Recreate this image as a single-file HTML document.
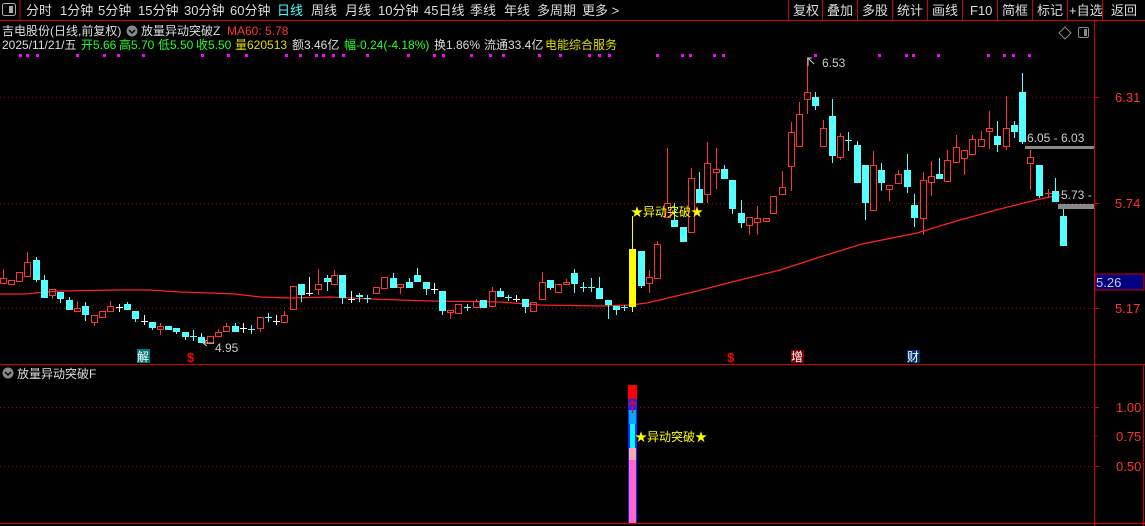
<!DOCTYPE html>
<html><head><meta charset="utf-8"><style>
html,body{margin:0;padding:0;background:#000;width:1145px;height:526px;overflow:hidden}
svg{display:block}
text{font-family:"Liberation Sans","Noto Sans CJK SC",sans-serif;font-size:12px}
</style></head><body>
<svg id="s" width="1145" height="526" xmlns="http://www.w3.org/2000/svg">
<rect width="1145" height="526" fill="#000"/>
<!-- toolbar -->
<rect x="2.5" y="3.5" width="13" height="12" fill="none" stroke="#aaa" rx="2"/>
<rect x="9" y="6" width="4" height="7" fill="#aaa"/>
<line x1="20" y1="0" x2="20" y2="20" stroke="#c00"/>
<line x1="0" y1="20.5" x2="1145" y2="20.5" stroke="#c00"/>
<g fill="#ddd" font-size="13">
<text x="26" y="15" style="font-size:13px">分时</text>
<text x="60" y="15" style="font-size:13px">1分钟</text>
<text x="98" y="15" style="font-size:13px">5分钟</text>
<text x="138" y="15" style="font-size:13px">15分钟</text>
<text x="184" y="15" style="font-size:13px">30分钟</text>
<text x="230" y="15" style="font-size:13px">60分钟</text>
<text x="277" y="15" style="font-size:13px" fill="#4ff">日线</text>
<text x="311" y="15" style="font-size:13px">周线</text>
<text x="345" y="15" style="font-size:13px">月线</text>
<text x="378" y="15" style="font-size:13px">10分钟</text>
<text x="424" y="15" style="font-size:13px">45日线</text>
<text x="470" y="15" style="font-size:13px">季线</text>
<text x="504" y="15" style="font-size:13px">年线</text>
<text x="537" y="15" style="font-size:13px">多周期</text>
<text x="582" y="15" style="font-size:13px">更多 &gt;</text>
</g>
<g stroke="#c00">
<line x1="788.5" y1="0" x2="788.5" y2="20"/><line x1="822.5" y1="0" x2="822.5" y2="20"/><line x1="857.5" y1="0" x2="857.5" y2="20"/><line x1="892.5" y1="0" x2="892.5" y2="20"/><line x1="927.5" y1="0" x2="927.5" y2="20"/><line x1="962.5" y1="0" x2="962.5" y2="20"/><line x1="997.5" y1="0" x2="997.5" y2="20"/><line x1="1032.5" y1="0" x2="1032.5" y2="20"/><line x1="1067.5" y1="0" x2="1067.5" y2="20"/><line x1="1102.5" y1="0" x2="1102.5" y2="20"/>
</g>
<g fill="#ddd">
<text x="793" y="15" style="font-size:13px">复权</text>
<text x="827" y="15" style="font-size:13px">叠加</text>
<text x="862" y="15" style="font-size:13px">多股</text>
<text x="897" y="15" style="font-size:13px">统计</text>
<text x="932" y="15" style="font-size:13px">画线</text>
<text x="970" y="15" style="font-size:13px">F10</text>
<text x="1002" y="15" style="font-size:13px">简框</text>
<text x="1037" y="15" style="font-size:13px">标记</text>
<text x="1069" y="15" style="font-size:13px">+自选</text>
<text x="1111" y="15" style="font-size:13px">返回</text>
</g>
<!-- info lines -->
<text x="2" y="35" fill="#ddd">吉电股份(日线,前复权)</text>
<circle cx="132" cy="31" r="5.5" fill="#888"/><path d="M129 30l3 3 3-3" stroke="#000" stroke-width="1.5" fill="none"/>
<text x="141" y="35" fill="#ddd">放量异动突破Z</text>
<text x="227" y="35" fill="#f33">MA60: 5.78</text>
<text x="2" y="49" fill="#ddd">2025/11/21/五</text>
<text x="81" y="49" fill="#2f2">开5.66</text>
<text x="119" y="49" fill="#2f2">高5.70</text>
<text x="158" y="49" fill="#2f2">低5.50</text>
<text x="196" y="49" fill="#2f2">收5.50</text>
<text x="235" y="49" fill="#dd0">量620513</text>
<text x="292" y="49" fill="#ddd">额3.46亿</text>
<text x="344" y="49" fill="#2f2">幅-0.24(-4.18%)</text>
<text x="434" y="49" fill="#ddd">换1.86%</text>
<text x="484" y="49" fill="#ddd">流通33.4亿</text>
<text x="545" y="49" fill="#dd0">电能综合服务</text>
<path d="M1065 27l6 6-6 6-6-6z" fill="none" stroke="#888"/>
<rect x="1078.5" y="27.5" width="10" height="10" rx="1.5" fill="none" stroke="#888"/><rect x="1084" y="29" width="3" height="7" fill="#888"/>
<!-- frames -->
<line x1="1094.5" y1="20" x2="1094.5" y2="526" stroke="#c00"/>
<line x1="0" y1="364.5" x2="1145" y2="364.5" stroke="#c00"/>
<line x1="0" y1="523.5" x2="1145" y2="523.5" stroke="#c00"/>
<line x1="1143.5" y1="364" x2="1143.5" y2="526" stroke="#c00"/>
<g stroke="#900" stroke-dasharray="1 3">
<line x1="0" y1="97.5" x2="1094" y2="97.5"/><line x1="0" y1="203.5" x2="1094" y2="203.5"/><line x1="0" y1="308.5" x2="1094" y2="308.5"/>
<line x1="0" y1="407.5" x2="1094" y2="407.5"/><line x1="0" y1="466.5" x2="1094" y2="466.5"/>
</g>
<g stroke="#c00"><line x1="1094" y1="97.5" x2="1099" y2="97.5"/><line x1="1094" y1="203.5" x2="1099" y2="203.5"/><line x1="1094" y1="308.5" x2="1099" y2="308.5"/><line x1="1094" y1="407.5" x2="1099" y2="407.5"/><line x1="1094" y1="436.5" x2="1097" y2="436.5"/><line x1="1094" y1="466.5" x2="1099" y2="466.5"/></g>
<g fill="#f33" style="font-size:13px">
<text x="1115" y="102" style="font-size:13px">6.31</text>
<text x="1115" y="208" style="font-size:13px">5.74</text>
<text x="1115" y="313" style="font-size:13px">5.17</text>
<text x="1116" y="412" style="font-size:13px">1.00</text>
<text x="1116" y="441" style="font-size:13px">0.75</text>
<text x="1116" y="471" style="font-size:13px">0.50</text>
</g>
<rect x="1095" y="274" width="49" height="16" fill="#000080" stroke="#c00"/>
<text x="1096" y="287" fill="#ccc" style="font-size:13px">5.26</text>
<g id="dots" fill="#f0f"></g>
<path id="ma" fill="none" stroke="#f22" stroke-width="1.3"/>
<g id="c"></g>
<!-- labels -->
<path d="M808 58v8M808 58h4M808 58l6 6" stroke="#ccc" fill="none"/>
<text x="822" y="67" fill="#ccc">6.53</text>
<path d="M203 343h11M203 343l4-3M203 343l4 3" stroke="#ccc" fill="none"/>
<text x="215" y="352" fill="#ccc">4.95</text>
<text x="1027" y="142" fill="#ccc">6.05 - 6.03</text>
<rect x="1025" y="146" width="69" height="3" fill="#888"/>
<text x="1061" y="199" fill="#ccc">5.73 -</text>
<rect x="1058" y="204" width="36" height="5" fill="#888"/>
<text x="631" y="216" fill="#ff0">★异动突破★</text>
<!-- markers -->
<rect x="137" y="349" width="13" height="14" fill="#007878"/><text x="137" y="361" fill="#fff">解</text>
<text x="187" y="362" fill="#f00" style="font-size:13px;font-weight:bold">$</text>
<text x="727" y="362" fill="#f00" style="font-size:13px;font-weight:bold">$</text>
<rect x="791" y="350" width="13" height="13" fill="#800000"/><text x="791" y="361" fill="#fff">增</text>
<rect x="907" y="350" width="13" height="13" fill="#003070"/><text x="907" y="361" fill="#fff">财</text>
<!-- lower panel -->
<circle cx="8" cy="373" r="5.5" fill="#888"/><path d="M5 372l3 3 3-3" stroke="#000" stroke-width="1.5" fill="none"/>
<text x="17" y="378" fill="#ddd">放量异动突破F</text>
<rect x="628" y="385" width="9" height="138" fill="#22f"/>
<rect x="628" y="385" width="9" height="14" fill="#f00"/>
<rect x="629" y="410" width="7" height="14" fill="#0af"/>
<rect x="630" y="424" width="5" height="24" fill="#0ff"/>
<rect x="629" y="448" width="7" height="12" fill="#faa"/>
<rect x="629" y="460" width="7" height="63" fill="#f6c"/>
<path d="M632.5 413v-11M629 405l3.5-4 3.5 4" stroke="#f00" stroke-width="1.5" fill="none"/>
<text x="635" y="441" fill="#ff0">★异动突破★</text>
</svg>
<script>
var NS="http://www.w3.org/2000/svg";
function el(t,a,p){var e=document.createElementNS(NS,t);for(var k in a)e.setAttribute(k,a[k]);p.appendChild(e);return e;}
var D=[
[3,269,278,283,284,'r'],[11,280,280,284,285,'r'],[19,272,272,281,281,'r'],[27,252,262,276,276,'r'],[36,257,260,280,282,'c'],[44,275,280,298,298,'c'],[52,289,289,295,299,'r'],[60,292,292,299,303,'c'],[69,297,300,310,310,'c'],[77,301,308,311,311,'r'],[85,302,306,315,321,'c'],[94,315,315,322,326,'r'],[102,311,311,317,317,'r'],[110,301,306,311,311,'r'],[119,304,307,307,311,'w'],[127,302,304,310,310,'c'],[135,311,311,319,322,'c'],[144,315,321,321,324,'w'],[152,322,322,328,330,'c'],[160,323,326,329,335,'r'],[168,326,326,330,330,'c'],[176,328,328,332,334,'c'],[185,332,332,337,340,'c'],[193,330,336,336,340,'cc'],[201,333,337,343,343,'c'],[210,336,336,343,343,'r'],[218,329,332,336,336,'r'],[226,323,326,331,331,'r'],[235,323,326,332,332,'c'],[243,323,328,328,332,'w'],[251,325,329,329,333,'cc'],[260,317,317,328,332,'r'],[268,313,317,317,321,'cc'],[276,315,321,321,324,'w'],[284,311,315,322,322,'r'],[293,286,286,309,309,'r'],[301,284,284,295,302,'c'],
[309,277,293,293,295,'w'],[318,269,284,289,295,'r'],[327,275,278,282,291,'c'],[334,270,275,284,284,'r'],[342,275,275,298,304,'c'],[351,291,299,299,302,'w'],[359,293,295,297,302,'c'],[367,295,298,298,302,'cc'],[376,287,287,293,293,'r'],[384,277,277,288,288,'r'],[393,273,278,288,288,'c'],[400,284,284,287,294,'r'],[409,278,282,288,288,'c'],[417,268,275,282,282,'c'],[426,282,282,289,295,'c'],[434,283,289,289,293,'w'],[442,291,291,311,315,'c'],[450,310,310,312,319,'r'],[458,304,304,313,313,'r'],[467,304,307,307,310,'cc'],[476,299,301,307,307,'r'],[483,300,300,308,308,'c'],[492,287,291,306,306,'r'],[500,288,291,297,297,'c'],[508,295,297,297,300,'cc'],[516,295,299,299,301,'w'],[525,299,299,307,313,'c'],[533,302,302,311,311,'r'],[542,272,282,299,299,'r'],[550,280,280,288,290,'c'],[558,284,284,292,292,'r'],[566,279,282,284,284,'r'],[574,269,273,284,293,'c'],[583,282,287,287,291,'cc'],[591,278,287,287,291,'cc'],[599,277,288,299,299,'c'],[608,300,300,305,319,'c'],[616,306,306,310,315,'c'],[624,305,307,307,310,'cc'],
[632,216,249,307,312,'y'],[641,251,251,286,288,'c'],[649,270,277,283,293,'r'],[657,241,244,278,278,'r'],[667,148,203,217,217,'r'],[674,203,220,227,227,'c'],[683,227,227,242,242,'c'],[691,168,178,232,232,'r'],[699,172,189,203,203,'c'],[707,142,163,194,203,'r'],[716,148,169,172,189,'r'],[724,165,169,179,179,'c'],[732,180,180,209,214,'c'],[741,200,213,223,228,'c'],[749,217,217,225,235,'r'],[757,206,218,222,235,'r'],[766,218,218,221,221,'r'],[773,196,196,213,213,'r'],[782,171,187,194,194,'r'],[791,122,132,166,191,'r'],[799,102,114,146,146,'r'],[807,57,92,99,114,'r'],[815,92,97,106,110,'c'],[823,120,128,146,146,'r'],[832,99,116,156,163,'c'],[840,133,136,157,160,'r'],[848,132,140,140,150,'cc'],[857,141,145,183,183,'c'],[865,165,165,203,220,'c'],[873,151,165,210,210,'r'],[881,163,170,183,191,'c'],[889,185,185,189,201,'r'],[898,170,174,183,183,'r'],[907,154,170,187,193,'c'],[914,194,205,218,227,'c'],[923,172,180,218,235,'r'],[931,161,176,182,196,'r'],[939,158,174,179,179,'c'],[947,150,160,181,181,'r'],[956,135,147,162,162,'r'],[964,150,150,158,175,'r'],[972,135,139,154,154,'r'],[981,131,139,146,146,'r'],[989,111,128,131,149,'r'],[997,121,136,145,152,'c'],[1006,96,128,146,150,'r'],[1014,121,125,132,138,'c'],[1022,73,92,142,144,'c'],[1030,150,157,163,190,'r'],[1039,165,165,196,198,'c'],[1048,189,193,193,197,'rc'],[1055,178,191,202,202,'c'],[1063,209,216,246,246,'c']
];
var g=document.getElementById('c');
D.forEach(function(d){var x=d[0],hi=d[1],t=d[2],b=d[3],lo=d[4],k=d[5];
var col={r:'#ff3232',c:'#54ffff',w:'#ffffff',cc:'#54ffff',rc:'#ff3232',y:'#ffff00'}[k];
if(k=='w'||k=='cc'||k=='rc'){el('line',{x1:x+.5,y1:hi,x2:x+.5,y2:lo+1,stroke:col},g);el('line',{x1:x-3,y1:t+.5,x2:x+4,y2:t+.5,stroke:col},g);return;}
if(hi<t)el('line',{x1:x+.5,y1:hi,x2:x+.5,y2:t,stroke:col},g);
if(lo>b)el('line',{x1:x+.5,y1:b,x2:x+.5,y2:lo,stroke:col},g);
if(k=='r')el('rect',{x:x-2.5,y:t+.5,width:6,height:Math.max(b-t,1),fill:'none',stroke:col},g);
else el('rect',{x:x-3,y:t,width:7,height:Math.max(b-t,1),fill:col},g);
});
var M=[[0,294],[25,294],[35,293],[60,291],[115,290],[150,290],[180,292],[210,293],[235,294],[260,297],[290,298],[330,297],[370,299],[430,301],[500,302],[540,305],[600,306],[630,305],[647,303],[693,292],[740,280],[780,270],[820,257],[862,244],[917,233],[960,220],[1000,209],[1040,199],[1060,195]];
document.getElementById('ma').setAttribute('d','M'+M.map(function(p){return p[0]+' '+p[1]}).join('L'));
var dx=[20,27,37,77,104,118,143,202,228,246,286,300,316,323,333,343,367,408,434,443,471,490,503,539,560,589,599,609,657,682,690,714,723,815,879,906,913,938,988,1004,1013,1029];
var dg=document.getElementById('dots');dx.forEach(function(x){el('rect',{x:x-1,y:54,width:3,height:3},dg);});
</script>
</body></html>
